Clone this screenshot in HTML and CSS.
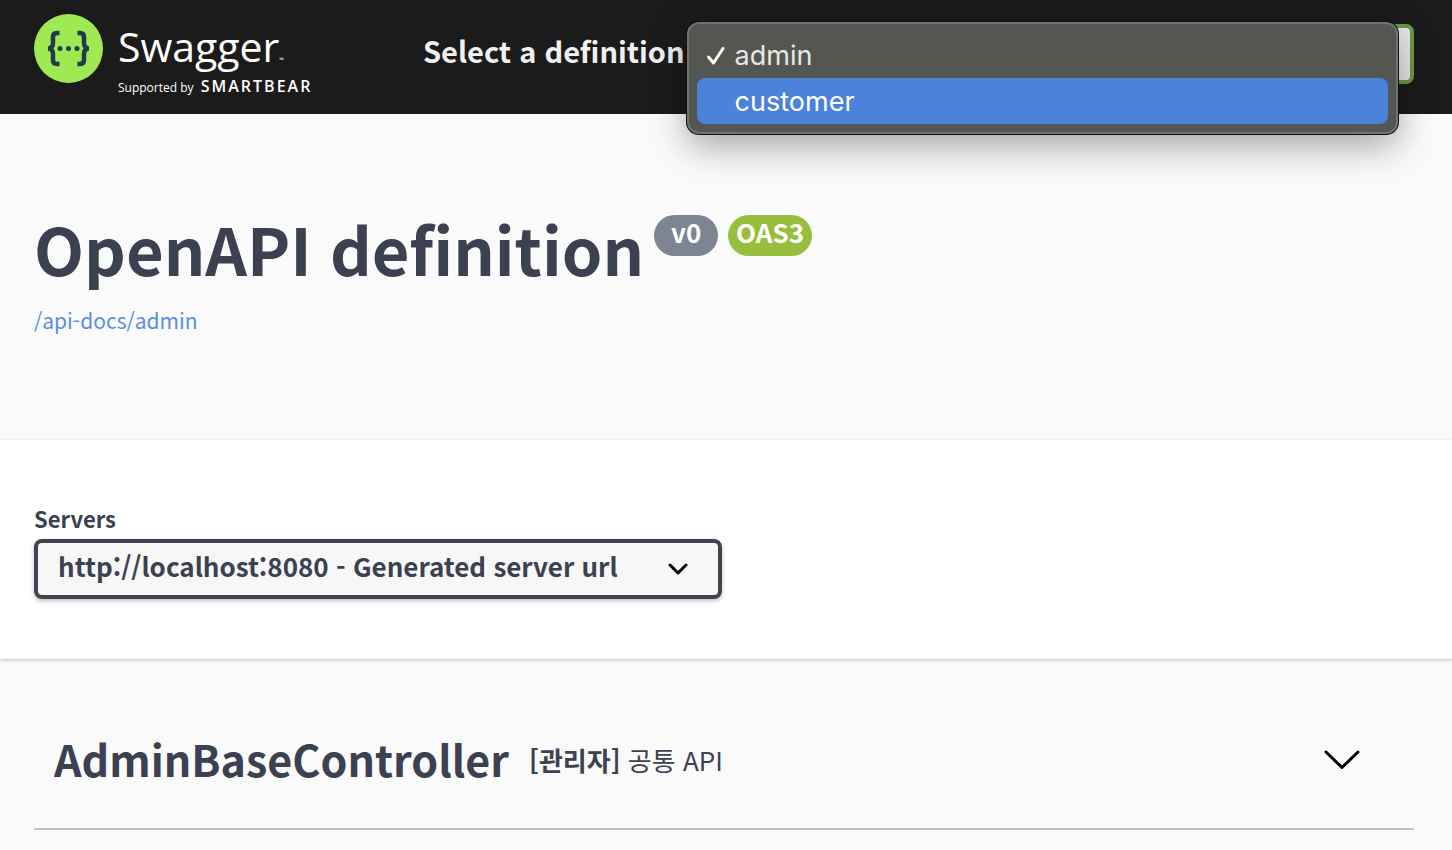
FILE: index.html
```html
<!DOCTYPE html>
<html lang="ko">
<head>
<meta charset="utf-8">
<meta name="viewport" content="width=device-width, initial-scale=1">
<title>Swagger UI</title>
<link rel="stylesheet" href="styles.css">
</head>
<body>
<header class="topbar">
  <a class="logo" href="#" aria-label="Swagger, supported by SmartBear">
    <svg class="logo-mark" viewBox="0 0 69 69" aria-hidden="true">
      <circle cx="34.5" cy="34.5" r="34.5" fill="#9fe953"/>
      <g fill="none" stroke="#24394a" stroke-width="4.500">
        <path d="M25.5 19h-2.5c-3 0-4 1.500-4 4v5.500c0 4-1.500 6-5 6 3.500 0 5 2 5 6v5.500c0 2.500 1 4 4 4h2.500"/>
        <path d="M43.500 19h2.500c3 0 4 1.500 4 4v5.500c0 4 1.500 6 5 6-3.500 0-5 2-5 6v5.500c0 2.500-1 4-4 4h-2.500"/>
      </g>
      <g fill="#24394a"><circle cx="26" cy="34.500" r="2.500"/><circle cx="34.500" cy="34.500" r="2.500"/><circle cx="43" cy="34.500" r="2.500"/></g>
    </svg>
    <span class="logo-text">
      <span class="logo-name">Swagger<small class="logo-tm">™</small></span>
      <span class="logo-by">Supported by <b class="logo-brand">SMARTBEAR</b></span>
    </span>
  </a>
  <div class="definition">
    <label class="definition-label" for="definition">Select a definition</label>
    <div class="definition-control">
      <select class="definition-select" id="definition"><option>admin</option><option>customer</option></select>
      <div class="menu" role="listbox" aria-label="Select a definition">
        <button class="menu-item" type="button" role="option" aria-selected="true">
          <svg class="menu-check" viewBox="0 0 22 22" aria-hidden="true"><path d="M3.500 13l5 6L18 4.500" fill="none" stroke="#fff" stroke-width="3" stroke-linecap="round" stroke-linejoin="round"/></svg>
          <span>admin</span>
        </button>
        <button class="menu-item menu-item-active" type="button" role="option" aria-selected="false">
          <span class="menu-check"></span>
          <span>customer</span>
        </button>
      </div>
    </div>
  </div>
</header>
<main>
  <section class="info">
    <div class="info-heading">
      <h1 class="info-title">OpenAPI definition</h1>
      <span class="badge">v0</span>
      <span class="badge badge-oas">OAS3</span>
    </div>
    <a class="info-link" href="#">/api-docs/admin</a>
  </section>
  <section class="servers">
    <label class="servers-label" for="servers">Servers</label>
    <div class="servers-control">
      <select class="servers-select" id="servers"><option>http://localhost:8080 - Generated server url</option></select>
      <svg class="servers-chevron" viewBox="0 0 20 12" aria-hidden="true"><path d="M2 2l8 8 8-8" fill="none" stroke="#000" stroke-width="3" stroke-linecap="round" stroke-linejoin="round"/></svg>
    </div>
  </section>
  <section class="tags">
    <div class="tag">
      <h2 class="tag-name">AdminBaseController</h2>
      <p class="tag-description"><strong>[관리자]</strong> 공통 API</p>
      <button class="tag-toggle" type="button" aria-label="Expand AdminBaseController">
        <svg class="tag-chevron" viewBox="0 0 36 20" aria-hidden="true"><path d="M2 2l16 15.500L34 2" fill="none" stroke="#000" stroke-width="3" stroke-linecap="round" stroke-linejoin="round"/></svg>
      </button>
    </div>
  </section>
</main>
</body>
</html>
```
FILE: styles.css
```css
* { box-sizing: border-box; }

body {
  margin: 0;
  background: #fafafa;
  color: #3b4151;
  font-family: "Noto Sans CJK KR", "Noto Sans", sans-serif;
}

h1, h2, p { margin: 0; }

.topbar {
  display: flex;
  align-items: center;
  padding: 14px 38px 20px 34px;
  background: #1b1b1b;
}

.logo {
  display: flex;
  align-items: flex-start;
  gap: 15px;
  flex: 0 0 389px;
  height: 80px;
  color: #fff;
  font-family: "Open Sans", sans-serif;
  text-decoration: none;
}

.logo-mark { width: 69px; height: 69px; }

.logo-text { display: flex; flex-direction: column; }

.logo-name {
  font-size: 41px;
  line-height: 64px;
}

.logo-tm {
  font-size: 6px;
  line-height: 1;
}

.logo-by {
  font-size: 12px;
  line-height: 16px;
  white-space: nowrap;
}

.logo-brand {
  margin-left: 4px;
  font-size: 16px;
  font-weight: 600;
  letter-spacing: 2px;
}

.definition {
  display: flex;
  flex: 1;
  align-items: center;
  gap: 6px;
}

.definition-label {
  padding-bottom: 8px;
  color: #f0f0f0;
  font-size: 29px;
  font-weight: 700;
  line-height: 44px;
  white-space: nowrap;
}

.definition-control {
  position: relative;
  flex: 1;
}

.definition-select {
  display: block;
  appearance: none;
  width: 100%;
  height: 60px;
  padding: 0 20px;
  border: 4px solid #6b9a45;
  border-radius: 8px;
  background: #e8e8e8;
  color: #3b4151;
  font: 700 26px "Noto Sans CJK KR", sans-serif;
}

.menu {
  position: absolute;
  top: -2px;
  right: 16px;
  left: -4px;
  padding: 8px;
  border: 2px solid #727471;
  border-radius: 12px;
  background: #535651;
  box-shadow: 0 0 0 1px #111, 0 12px 36px rgba(0, 0, 0, 0.35);
}

.menu-item {
  display: flex;
  align-items: center;
  gap: 8px;
  width: 100%;
  height: 46px;
  padding: 0 8px;
  border: 0;
  border-radius: 8px;
  background: none;
  color: #e8e8e8;
  font: 400 27px Inter, sans-serif;
}

.menu-item-active {
  background: #4c82da;
  color: #fff;
}

.menu-check { width: 22px; height: 22px; }

.info {
  min-height: 326px;
  padding: 82px 38px 0 34px;
}

.info-heading {
  display: flex;
  align-items: flex-start;
  gap: 10px;
}

.info-title {
  font-size: 65px;
  font-weight: 700;
  line-height: 104px;
}

.badge {
  min-width: 64px;
  height: 41px;
  margin-top: 19px;
  padding: 0 8px;
  border-radius: 21px;
  background: #7d8492;
  color: #fff;
  font-size: 26px;
  font-weight: 700;
  line-height: 34px;
  text-align: center;
}

.badge-oas { background: #97bf3d; }

.info-link {
  display: inline-block;
  color: #5a90df;
  font-size: 21px;
  line-height: 40px;
  text-decoration: none;
}

.servers {
  padding: 62px 34px 60px;
  background: #fff;
  box-shadow: 0 1px 3px rgba(0, 0, 0, 0.25);
}

.servers-label {
  display: block;
  padding-bottom: 5px;
  font-size: 22px;
  font-weight: 700;
  line-height: 32px;
}

.servers-control {
  position: relative;
  width: 688px;
  max-width: 100%;
}

.servers-select {
  display: block;
  appearance: none;
  width: 100%;
  height: 60px;
  padding: 0 64px 8px 20px;
  border: 4px solid #41444e;
  border-radius: 8px;
  background: #f7f7f7;
  box-shadow: 0 2px 4px rgba(0, 0, 0, 0.25);
  color: #3b4151;
  font: 700 26px "Noto Sans CJK KR", sans-serif;
}

.servers-chevron {
  position: absolute;
  top: 24px;
  right: 34px;
  width: 20px;
  height: 12px;
  pointer-events: none;
}

.tags { padding: 32px 38px 0 34px; }

.tag {
  display: flex;
  align-items: center;
  gap: 20px;
  min-height: 139px;
  padding: 0 54px 0 20px;
  border-bottom: 2px solid #c1c2c8;
}

.tag-name {
  padding-bottom: 4px;
  font-size: 43px;
  font-weight: 700;
  line-height: 72px;
}

.tag-description {
  flex: 1;
  font-size: 26px;
  line-height: 40px;
}

.tag-toggle {
  padding: 0;
  border: 0;
  background: none;
}

.tag-chevron {
  display: block;
  width: 36px;
  height: 20px;
}
```
